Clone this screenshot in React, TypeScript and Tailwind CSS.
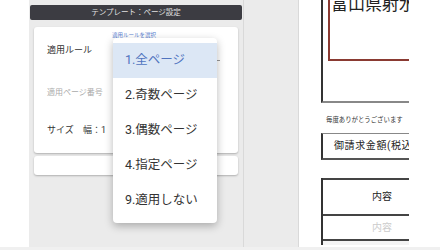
const font = "font-['Roboto','Noto_Sans_CJK_JP',sans-serif]";

const items = ["1.全ページ", "2.奇数ページ", "3.偶数ページ", "4.指定ページ", "9.適用しない"];

function RuleMenu() {
  return (
    <div className="absolute left-[113px] top-[38px] w-[104px] rounded-[4px] bg-white py-[5px] shadow-[0_3px_8px_rgba(0,0,0,0.28)]">
      {items.map((label, i) => (
        <div
          key={label}
          className={
            i === 0
              ? "flex h-[35px] items-center bg-[#dce7f5] pl-[12px] text-[12.5px] text-[#5074bf]"
              : "flex h-[35px] items-center pl-[12px] text-[12.5px] text-[#333]"
          }
        >
          {label}
        </div>
      ))}
    </div>
  );
}

function SettingsPanel() {
  return (
    <div className="flex w-[215px] flex-col border-r border-[#d9d9d9] bg-[#ebebeb] px-[1px] pt-[5px]">
      <div className="flex h-[15px] items-center justify-center rounded-[2px] bg-[#3c3c42] text-[7.5px] text-[#e0e0e0]">
        テンプレート：ページ設定
      </div>
      <div className="mx-[4px] mt-[7px] flex h-[126px] flex-col rounded-[3px] bg-white pl-[13px] shadow-[0_1px_2px_rgba(0,0,0,0.25)]">
        <div className="mt-[17px] text-[9px] text-[#333]">適用ルール</div>
        <div className="mt-[29px] text-[8px] text-[#aaa]">適用ページ番号</div>
        <div className="mt-[25px] flex text-[9px] text-[#333]">
          <span className="w-[36px]">サイズ</span>
          <span>幅：1</span>
        </div>
      </div>
      <div className="mx-[4px] mt-[3px] h-[19px] rounded-[3px] bg-white shadow-[0_1px_2px_rgba(0,0,0,0.25)]" />
    </div>
  );
}

function Preview() {
  return (
    <div className="flex-1 overflow-hidden bg-white pl-[22px]">
      <div className="w-[88px] overflow-hidden">
        <div className="flex h-[103px] flex-col border-b-[2px] border-l-[2px] border-b-[#888] border-l-[#333] pl-[5px]">
          <div className="h-[61px] w-[90px] border-b-[2px] border-l-[2px] border-[#8a3a32] pl-[1px]">
            <div className="mt-[-6px] whitespace-nowrap text-[17px] leading-[20px] text-[#222]">富山県射水市</div>
          </div>
        </div>
        <div className="mt-[13px] whitespace-nowrap pl-[5px] text-[6.4px] text-[#333]">毎度ありがとうございます</div>
        <div className="mt-[7px] flex h-[27px] w-[100px] items-center whitespace-nowrap border-b-[2px] border-l-[2px] border-t border-b-[#555] border-l-[#333] border-t-[#888] pl-[11px] text-[10px] tracking-[0.6px] text-[#222]">
          御請求金額(税込
        </div>
        <div className="mt-[18px] border-l-[2px] border-[#333]">
          <div className="flex h-[36px] items-center border-t-[2px] border-[#444] pl-[49px] text-[10px] text-[#222]">内容</div>
          <div className="flex h-[25px] items-center border-t-[2px] border-[#444] pl-[49px] text-[10px] text-[#ccc]">内容</div>
          <div className="h-[6px] border-t-[2px] border-[#444] bg-[#f4f4f4]" />
        </div>
      </div>
    </div>
  );
}

export default function App() {
  return (
    <div className={`relative flex h-[250px] w-[440px] flex-col overflow-hidden bg-white ${font}`}>
      <div className="flex h-[247px]">
        <div className="w-[29px] bg-white" />
        <SettingsPanel />
        <div className="w-[55px] border-r border-[#d9d9d9] bg-[#ebebeb]" />
        <Preview />
      </div>
      <div className="h-[3px] bg-[#f0f0f0]" />
      <div className="absolute left-[112px] top-[31px] text-[5.5px] text-[#5a80d0]">適用ルールを選択</div>
      <div className="absolute left-[217px] top-[60px] h-[1px] w-[3px] bg-[#999]" />
      <RuleMenu />
    </div>
  );
}
